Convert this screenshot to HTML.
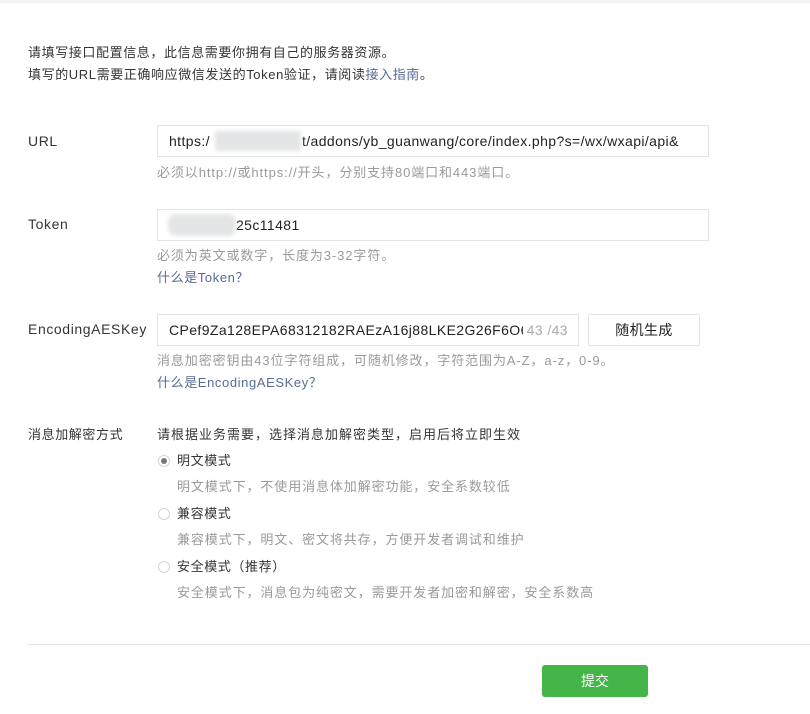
<!DOCTYPE html>
<html><head><meta charset="utf-8"><style>
body{margin:0;width:810px;height:714px;background:#fff;position:relative;overflow:hidden;font-family:"Liberation Sans","Noto Sans CJK SC",sans-serif;font-size:13px;color:#353535}
.a{position:absolute;white-space:nowrap;line-height:18px;letter-spacing:0.6px}
.g{color:#9a9a9a;letter-spacing:0.9px}
.l{color:#576b95}
.in{position:absolute;border:1px solid #e4e4e4;box-sizing:border-box;height:32px;line-height:30px;padding-left:11px;font-size:14px;color:#222;white-space:nowrap;overflow:hidden;background:#fff;letter-spacing:0.4px}
.blur{position:absolute;background:#e3e5e6;filter:blur(2px)}
.r{position:absolute;left:158px;width:12px;height:12px;border:1px solid #d5d5d5;border-radius:50%;box-sizing:border-box}
</style></head><body>
<div style="position:absolute;left:0;top:0;width:810px;height:3px;background:#f2f2f2"></div>
<div class="a" style="left:28px;top:44px">请填写接口配置信息，此信息需要你拥有自己的服务器资源。</div>
<div class="a" style="left:28px;top:66px">填写的URL需要正确响应微信发送的Token验证，请阅读<span class="l">接入指南</span>。</div>

<div class="a" style="left:28px;top:132px;font-size:14px">URL</div>
<div class="in" style="left:157px;top:125px;width:552px">https:/<span style="display:inline-block;width:92px"></span>t/addons/yb_guanwang/core/index.php?s=/wx/wxapi/api&amp;</div>
<div class="blur" style="left:215px;top:131px;width:86px;height:20px"></div>
<div class="a g" style="left:157px;top:164px">必须以http://或https://开头，分别支持80端口和443端口。</div>

<div class="a" style="left:28px;top:215px;font-size:14px">Token</div>
<div class="in" style="left:157px;top:209px;width:552px"><span style="display:inline-block;width:67px"></span>25c11481</div>
<div class="blur" style="left:168px;top:214px;width:68px;height:22px;border-radius:8px"></div>
<div class="a g" style="left:157px;top:247px">必须为英文或数字，长度为3-32字符。</div>
<div class="a l" style="left:157px;top:269px">什么是Token？</div>

<div class="a" style="left:28px;top:320px;font-size:14px">EncodingAESKey</div>
<div class="in" style="left:157px;top:314px;width:422px"><span style="display:inline-block;width:354px;overflow:hidden;vertical-align:top">CPef9Za128EPA68312182RAEzA16j88LKE2G26F6O688</span><span style="position:absolute;right:10px;color:#aaa">43 /43</span></div>
<div class="in" style="left:588px;top:314px;width:112px;padding:0;text-align:center;border-radius:2px">随机生成</div>
<div class="a g" style="left:157px;top:352px">消息加密密钥由43位字符组成，可随机修改，字符范围为A-Z，a-z，0-9。</div>
<div class="a l" style="left:157px;top:374px">什么是EncodingAESKey？</div>

<div class="a" style="left:28px;top:426px">消息加解密方式</div>
<div class="a" style="left:157px;top:426px;letter-spacing:1px">请根据业务需要，选择消息加解密类型，启用后将立即生效</div>
<div class="r" style="top:455px"><div style="position:absolute;left:2px;top:2px;width:6px;height:6px;border-radius:50%;background:#777"></div></div>
<div class="a" style="left:177px;top:452px">明文模式</div>
<div class="a g" style="left:177px;top:478px">明文模式下，不使用消息体加解密功能，安全系数较低</div>
<div class="r" style="top:508px"></div>
<div class="a" style="left:177px;top:505px">兼容模式</div>
<div class="a g" style="left:177px;top:531px">兼容模式下，明文、密文将共存，方便开发者调试和维护</div>
<div class="r" style="top:561px"></div>
<div class="a" style="left:177px;top:558px">安全模式（推荐）</div>
<div class="a g" style="left:177px;top:584px">安全模式下，消息包为纯密文，需要开发者加密和解密，安全系数高</div>

<div style="position:absolute;left:28px;top:644px;width:782px;height:1px;background:#e4e4e4"></div>
<div style="position:absolute;left:542px;top:665px;width:106px;height:32px;background:#44b549;border-radius:3px;color:#fff;text-align:center;line-height:32px;font-size:14px">提交</div>
</body></html>
